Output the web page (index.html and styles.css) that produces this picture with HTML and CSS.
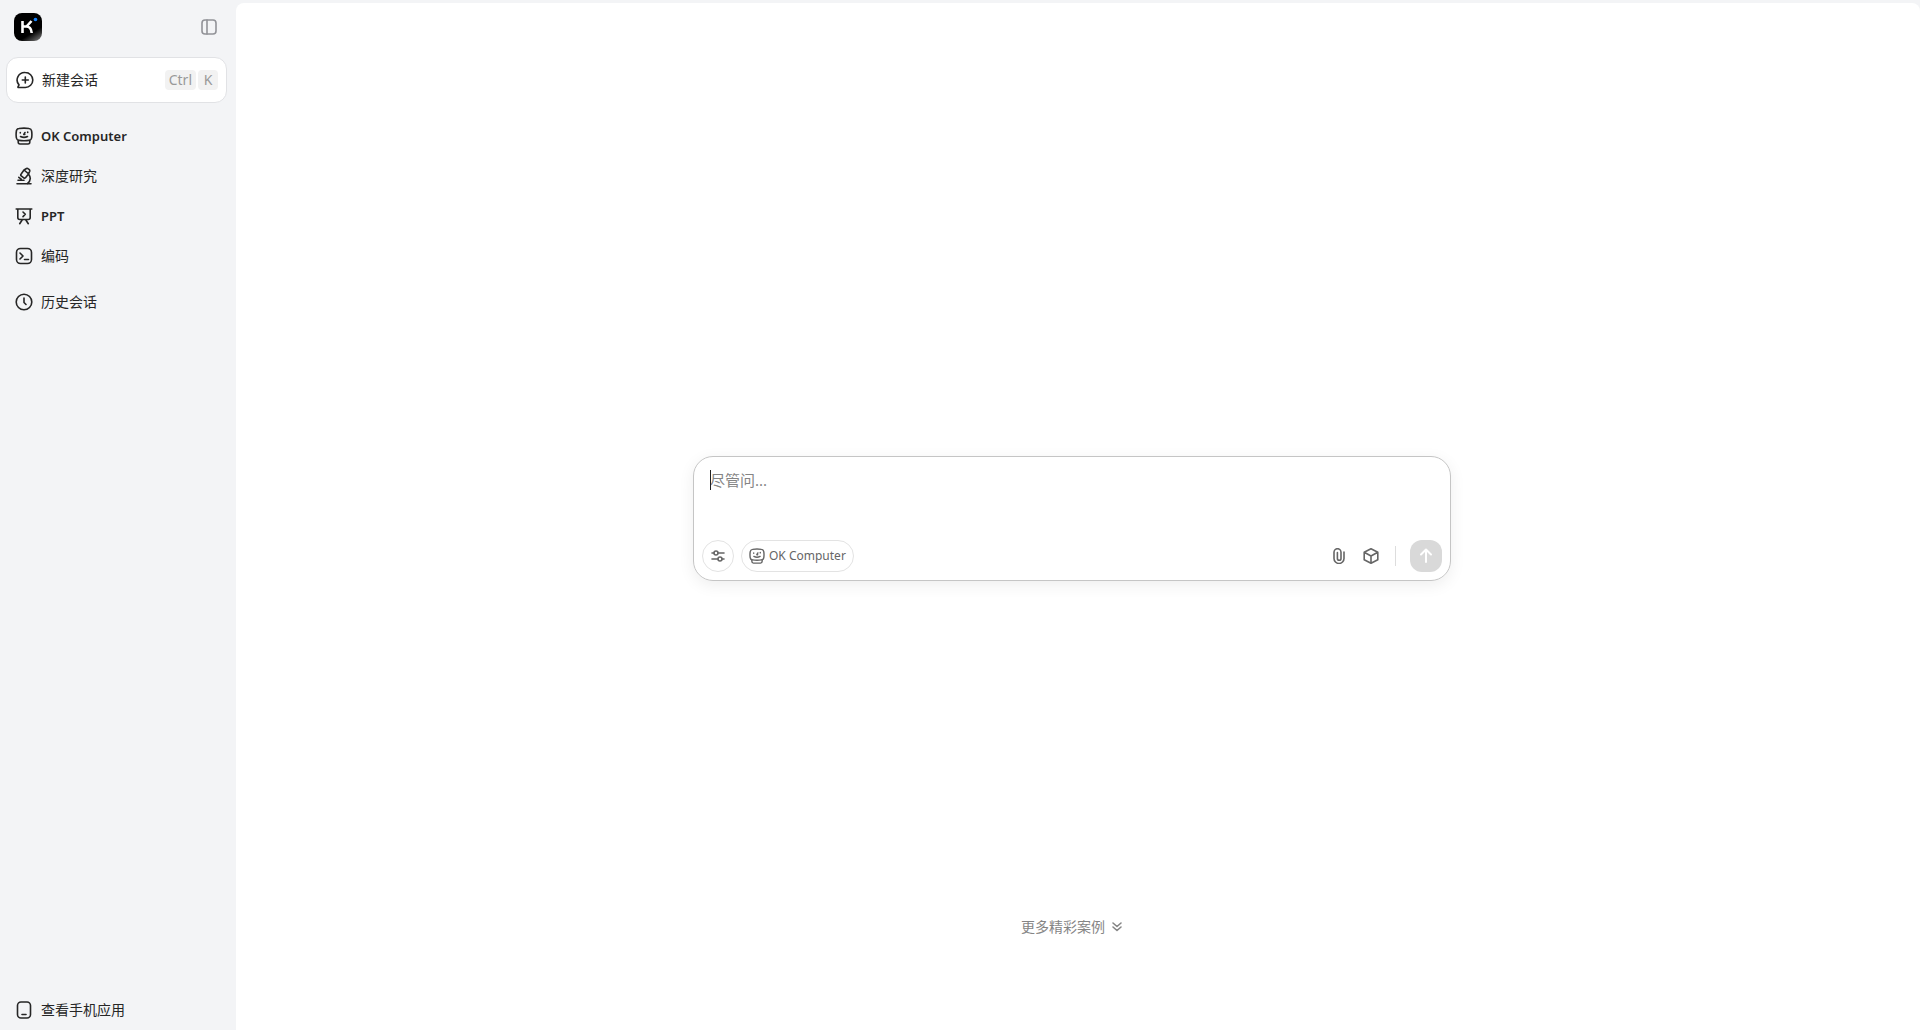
FILE: index.html
```html
<!DOCTYPE html>
<html lang="zh-CN">
<head>
<meta charset="utf-8">
<meta name="viewport" content="width=device-width, initial-scale=1">
<title>Kimi</title>
<link rel="stylesheet" href="styles.css">
</head>
<body>
<svg class="sprite" aria-hidden="true">
  <symbol id="computer" viewBox="0 0 18 18">
    <path d="M4 1.500Q9 .7 14 1.500q2.300.3 2.600 2.500.6 3.500 0 7-.3 2.100-2.600 2.400Q9 14.200 4 13.400q-2.300-.3-2.600-2.400-.6-3.500 0-7Q1.700 1.800 4 1.500Z"/>
    <path d="M3.200 13.500v1.500q0 2 1.800 2h8q1.800 0 1.800-2v-1.500M5.500 9.500q3.500 1.800 7 0M10 5.500L8.800 7.500h1M5.300 5.500v.5M12.700 5v.5" />
  </symbol>
</svg>
<div class="app">
  <aside class="sidebar">
    <header class="brand">
      <a href="#" class="logo" aria-label="Kimi">
        <svg width="28" height="28" viewBox="0 0 28 28">
          <defs><linearGradient id="shade" x1="0.3" y1="0.2" x2="0.8" y2="1"><stop offset="0.65" stop-color="#000"/><stop offset="1" stop-color="#666"/></linearGradient></defs>
          <rect width="28" height="28" rx="8" fill="url(#shade)"/>
          <path d="M8.500 8v12M17.500 8l-5 5.500H9M11.500 13.500q5.700-.5 6.200 6.500" fill="none" stroke="#fff" stroke-width="2.600"/>
          <circle cx="21.500" cy="6.500" r="1.800" fill="#1683ff"/>
        </svg>
      </a>
      <button class="toggle" aria-label="收起侧边栏">
        <svg class="icon" width="16" height="16" viewBox="0 0 16 16"><rect x="1" y="1" width="14" height="14" rx="3"/><path d="M6 1v14"/></svg>
      </button>
    </header>
    <button class="new-chat">
      <svg class="icon" width="18" height="18" viewBox="0 0 18 18"><path d="M9.300 1.500a7.500 7.500 0 1 1 0 15H2.500q-.8 0-.5-.7l1-1.900A7.500 7.500 0 0 1 9.300 1.500ZM9.300 6v6M6.300 9h6"/></svg>
      <span class="new-label">新建会话</span>
      <kbd>Ctrl</kbd><kbd>K</kbd>
    </button>
    <nav class="menu">
      <a href="#" class="latin"><svg class="icon" width="18" height="18"><use href="#computer"/></svg>OK Computer</a>
      <a href="#"><svg class="icon" width="18" height="18" viewBox="0 0 18 18"><path d="M2 16.800h14M3 13.300h6M9 3l2.500-1.500q.8-.4 1.500.2l1.300 1q.7.600.4 1.500l-1 2.600-3.200 3.900q-.8.900-1.700.2L6.200 8.800q-.9-.7-.2-1.600ZM9 3l4.700 3.800M13.800 7.500q3.600 5-1.600 9.300M3.800 10.300l2.400 1.900"/></svg>深度研究</a>
      <a href="#" class="latin"><svg class="icon" width="18" height="18" viewBox="0 0 18 18"><path d="M1.200 2h15.600M2.800 2v8.500q0 2 2 2h8.400q2 0 2-2V2M8 5l2.300 2.300L8 9.600M7.300 12.700l-2.600 4M10.700 12.700l2.600 4"/></svg>PPT</a>
      <a href="#"><svg class="icon" width="18" height="18" viewBox="0 0 18 18"><rect x="1.500" y="1.500" width="15" height="15" rx="4"/><path d="M5 6l3 3-3 3M9.500 12.500h4"/></svg>编码</a>
    </nav>
    <nav class="menu history">
      <a href="#"><svg class="icon" width="18" height="18" viewBox="0 0 18 18"><circle cx="9" cy="9" r="7.800"/><path d="M9 5v4.500l2 2"/></svg>历史会话</a>
    </nav>
    <nav class="menu bottom">
      <a href="#"><svg class="icon" width="18" height="18" viewBox="0 0 18 18"><rect x="2.500" y="1" width="13" height="16" rx="3.500"/><path d="M7 13.500h4"/></svg>查看手机应用</a>
    </nav>
  </aside>
  <main class="main">
    <form class="composer">
      <div class="field">
        <textarea class="prompt" rows="2" aria-label="输入消息" placeholder="尽管问..."></textarea>
        <span class="caret"></span>
      </div>
      <div class="tools">
        <button type="button" class="round" aria-label="设置">
          <svg class="icon" width="16" height="16" viewBox="0 0 16 16"><path d="M2 5h2M8 5h6M2 11h6M12 11h2"/><circle cx="6" cy="5" r="2"/><circle cx="10" cy="11" r="2"/></svg>
        </button>
        <button type="button" class="chip"><svg class="icon" width="16" height="16"><use href="#computer"/></svg>OK Computer</button>
        <span class="spacer"></span>
        <button type="button" class="plain" aria-label="添加附件">
          <svg class="icon" width="16" height="16" viewBox="0 0 16 16"><path d="M13 4v6.500a5 5 0 0 1-10 0V4.200a3.500 3.500 0 0 1 7 0v6.300a1.800 1.800 0 0 1-3.600 0V4.500"/></svg>
        </button>
        <button type="button" class="plain" aria-label="模型">
          <svg class="icon" width="16" height="16" viewBox="0 0 16 16"><path d="M8 .8l6.800 3.500v7.400L8 15.200l-6.800-3.500V4.300ZM1.200 4.300L8 8l6.800-3.700M8 8v7.200"/></svg>
        </button>
        <span class="divider"></span>
        <button type="submit" class="send" aria-label="发送" disabled>
          <svg width="16" height="16" viewBox="0 0 16 16"><path d="M8 14V2M3 6.500l5-5 5 5"/></svg>
        </button>
      </div>
    </form>
    <a href="#" class="more">更多精彩案例<svg class="icon" width="12" height="12" viewBox="0 0 12 12"><path d="M2 2l4 3.500L10 2M2 6l4 3.500L10 6"/></svg></a>
  </main>
</div>
</body>
</html>
```
FILE: styles.css
```css
* { box-sizing: border-box; }
body {
  margin: 0;
  background: #f3f4f6;
  color: #262626;
  font: 14px/20px "Noto Sans", "Noto Sans CJK SC", sans-serif;
}
button { font: inherit; color: inherit; border: 0; padding: 0; background: none; }
a { color: inherit; text-decoration: none; }
.sprite { position: absolute; width: 0; height: 0; }
.icon { fill: none; stroke: currentColor; stroke-width: 1.6; stroke-linecap: round; stroke-linejoin: round; flex: none; }
.app { display: flex; min-height: 100vh; }
.sidebar { width: 236px; flex: none; display: flex; flex-direction: column; padding: 13px 9px 0 6px; }
.brand { display: flex; align-items: center; justify-content: space-between; height: 28px; padding: 0 10px 0 8px; }
.logo, .toggle { display: flex; }
.toggle { color: #929398; }
.new-chat {
  display: flex;
  align-items: center;
  height: 46px;
  margin: 16px 0 13px;
  padding: 0 8px 0 9px;
  background: #fff;
  border: 1px solid #e1e2e5;
  border-radius: 12px;
}
.new-label { flex: 1; margin-left: 8px; text-align: left; }
kbd {
  min-width: 20px;
  padding: 0 4px;
  margin-left: 2px;
  font: 14px/20px "Noto Sans", sans-serif;
  text-align: center;
  color: #999;
  background: #f2f2f2;
  border-radius: 4px;
}
.menu a { display: flex; align-items: center; gap: 8px; height: 40px; padding: 0 9px; }
.menu .latin { font-size: 13px; font-weight: 600; }
.history { margin-top: 6px; }
.bottom { margin-top: auto; }
.main {
  flex: 1;
  display: flex;
  flex-direction: column;
  align-items: center;
  margin-top: 3px;
  padding: 0 12px 0 0;
  background: #fff;
  border-radius: 8px 8px 0 0;
}
.composer {
  width: 100%;
  max-width: 758px;
  margin-top: 44vh;
  padding: 13px 8px 8px;
  border: 1px solid #c5c5c5;
  border-radius: 20px;
  box-shadow: 0 4px 16px rgba(0, 0, 0, 0.07);
}
.field { position: relative; }
.prompt {
  display: block;
  width: 100%;
  height: 62px;
  padding: 0 8px;
  border: 0;
  outline: 0;
  resize: none;
  background: none;
  font: 15px/20px "Noto Sans", "Noto Sans CJK SC", sans-serif;
}
.prompt::placeholder { color: #858585; }
.caret { position: absolute; left: 8px; top: 0; width: 1px; height: 20px; background: #222; }
.prompt:focus + .caret { display: none; }
.tools { display: flex; align-items: center; height: 32px; margin-top: 8px; color: #666; }
.round, .chip { display: flex; align-items: center; justify-content: center; height: 32px; border: 1px solid #e3e3e3; border-radius: 16px; }
.round { width: 32px; margin-right: 7px; }
.chip { gap: 4px; padding: 0 7px; font-size: 12px; }
.spacer { flex: 1; }
.plain { display: flex; padding: 8px; }
.divider { width: 1px; height: 20px; background: #ddd; margin: 0 14px 0 8px; }
.send { display: flex; align-items: center; justify-content: center; width: 32px; height: 32px; border-radius: 12px; background: #d9d9d9; }
.send path { fill: none; stroke: #fff; stroke-width: 2; stroke-linecap: round; stroke-linejoin: round; }
.more { display: flex; align-items: center; gap: 6px; margin: auto 0 93px; color: #858585; }
```
